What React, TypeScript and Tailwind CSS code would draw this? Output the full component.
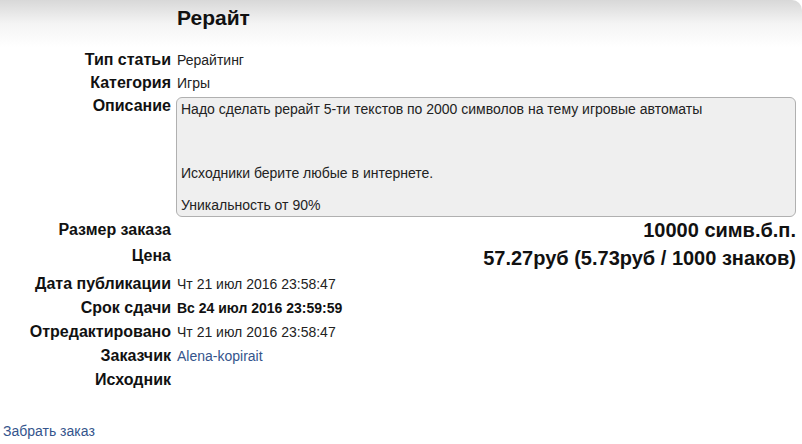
const rows = [
  { label: "Дата публикации", value: "Чт 21 июл 2016 23:58:47" },
  { label: "Срок сдачи", value: "Вс 24 июл 2016 23:59:59", bold: true },
  { label: "Отредактировано", value: "Чт 21 июл 2016 23:58:47" },
  { label: "Заказчик", value: "Alena-kopirait", link: true },
  { label: "Исходник", value: "" },
];

const Label = ({ children, className = "" }: { children: React.ReactNode; className?: string }) => (
  <div className={`w-[171px] shrink-0 text-right text-[16px] font-bold text-[#111] ${className}`}>{children}</div>
);

export default function App() {
  return (
    <div className="w-[802px] h-[444px] bg-white text-[#222] overflow-hidden" style={{ fontFamily: '"Liberation Sans", Arial, sans-serif' }}>
      <div className="h-[47px] bg-gradient-to-b from-[#d8d8d8] via-[#f4f4f4] to-white rounded-tr-[10px]">
        <h1 className="pl-[177px] pt-[5px] text-[21px] leading-[26px] font-bold text-[#111]">Рерайт</h1>
      </div>

      <div className="pr-[6px]">
        <div className="flex h-[24px]">
          <Label className="leading-[26px]">Тип статьи</Label>
          <div className="ml-[6px] text-[14px] leading-[26px]">Рерайтинг</div>
        </div>
        <div className="flex h-[24px]">
          <Label className="leading-[24px]">Категория</Label>
          <div className="ml-[6px] text-[14px] leading-[24px]">Игры</div>
        </div>
        <div className="flex h-[123px]">
          <Label className="leading-[22px]">Описание</Label>
          <div className="ml-[5px] mt-[2px] flex-1 h-[120px] rounded-[6px] border border-[#b0b0b0] bg-[#efefef] px-[4px] pt-[3px] text-[14px] leading-[16px] whitespace-pre-line">
            {"Надо сделать рерайт 5-ти текстов по 2000 символов на тему игровые автоматы\n\n\n\nИсходники берите любые в интернете.\n\nУникальность от 90%"}
          </div>
        </div>
        <div className="flex h-[24px]">
          <Label className="leading-[24px]">Размер заказа</Label>
          <div className="ml-[6px] flex-1 text-right text-[20px] font-bold leading-[24px] text-[#111]">10000 симв.б.п.</div>
        </div>
        <div className="flex h-[30px]">
          <Label className="pt-[2px] leading-[24px]">Цена</Label>
          <div className="ml-[6px] flex-1 pt-[3px] text-right text-[20px] font-bold leading-[26px] text-[#111]">57.27руб (5.73руб / 1000 знаков)</div>
        </div>
        {rows.map((r) => (
          <div key={r.label} className="flex h-[24px]">
            <Label className="leading-[24px]">{r.label}</Label>
            <div
              className={`ml-[6px] text-[14px] leading-[24px] ${r.bold ? "font-bold text-[#111]" : ""} ${r.link ? "text-[#34548c]" : ""}`}
            >
              {r.value}
            </div>
          </div>
        ))}
      </div>

      <a href="#" className="mt-[31px] ml-[3px] block w-max text-[14px] leading-[16px] text-[#34548c]">
        Забрать заказ
      </a>
    </div>
  );
}
